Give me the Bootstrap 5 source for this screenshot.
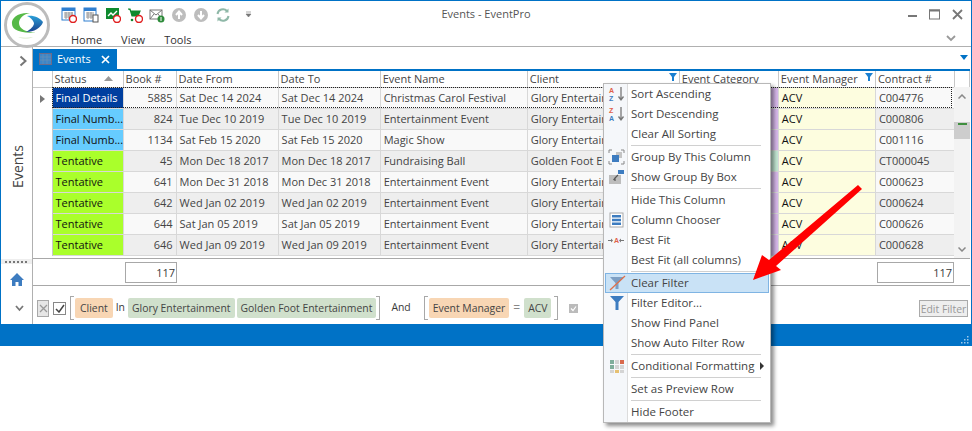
<!DOCTYPE html>
<html lang="en">
<head>
<meta charset="UTF-8" />
<title>Events - EventPro</title>
<link href="https://cdn.jsdelivr.net/npm/bootstrap@5.3.0/dist/css/bootstrap.min.css" rel="stylesheet" />
<style>
  body { background: #fff; font-family: "Open Sans", "Noto Sans", sans-serif; font-size: 11px; color: #3a3a3a; overflow: hidden; }
  .app-win { width: 972px; height: 346px; background: #fff; border: 1px solid #0072c6; border-bottom: 0; position: relative; }
  .ribbon { height: 46px; border-bottom: 1px solid #b0b0b0; }
  .logo-wrap { position: absolute; left: 3px; top: 1px; }
  .qat { padding-left: 60px; height: 27px; margin-bottom: 4px; gap: 6px; }
  .qat-more { margin-left: 8px; }
  .win-title { position: absolute; left: 0; right: 0; top: 5px; text-align: center; color: #555; }
  .win-btns { position: absolute; right: 8px; top: 8px; gap: 12px; }
  .rib-chevron { position: absolute; right: 15px; top: 34px; }
  .rib-tabs { padding-left: 70px; gap: 19px; height: 15px; color: #333; line-height: 15px; }
  .body-row { height: 277px; }
  .rail { width: 32px; border-right: 1px solid #b0b0b0; }
  .rail-top { height: 212px; }
  .rail-open { position: absolute; left: 18px; top: 8px; }
  .rail-label { position: absolute; left: 6px; top: 98px; writing-mode: vertical-rl; transform: rotate(180deg); font-size: 14px; color: #444; }
  .grip { height: 5px; background: #eee; }
  .rail-home { margin-top: 9px; }
  .rail-more { margin-top: 19px; padding-left: 6px; }
  .main-col { width: 937px; }
  .tab-strip { height: 24px; border-bottom: 2px solid #0072c6; }
  .doc-tab { width: 84px; height: 20px; margin-top: 2px; background: #0072c6; color: #fff; padding-left: 6px; gap: 5px; font-size: 11px; }
  .tab-close { margin-left: 5px; }
  .tab-menu { position: absolute; right: 2px; top: 8px; }
  .grid-box { height: 188px; border-bottom: 1px solid #a8a8a8; overflow: hidden; }
  .ev-table { table-layout: fixed; width: 937px; border-collapse: collapse; margin: 0; }
  .ev-table th { font-weight: 400; height: 16px; padding: 0 2px; border-right: 1px solid #c8c8c8; border-bottom: 1px solid #c8c8c8; background: #fff; position: relative; white-space: nowrap; overflow: hidden; line-height: 15px; color: #444; }
  .ev-table td { height: 21px; padding: 0 3px; border-right: 1px solid #d8d8d8; border-bottom: 1px solid #d8d8d8; white-space: nowrap; overflow: hidden; line-height: 20px; color: #444; }
  .ev-table tr:nth-child(odd) td { background: #f9f9f9; }
  .ev-table tr:nth-child(even) td { background: #eeeeee; }
  .ev-table td.ind { background: #fff !important; border-bottom: 0; border-right-color: #c8c8c8; padding: 0; text-align: center; }
  .ev-table td.num { text-align: right; }
  .ev-table td.st-details { background: #003f9f !important; color: #fff; }
  .ev-table td.st-numbers { background: #66ccff !important; color: #111; }
  .ev-table td.st-tent { background: #aaff2b !important; color: #111; }
  .ev-table td.mgr { background: #fdfddf !important; color: #111; }
  .ev-table td.cat-p { background: #d7b8ea !important; }
  .ev-table td.cat-g { background: #c4e8d4 !important; }
  .c-ind { width: 19px; } .c-st { width: 71px; } .c-bk { width: 53px; } .c-dt { width: 102px; }
  .c-nm { width: 147px; } .c-cl { width: 152px; } .c-cat { width: 99px; } .c-mg { width: 97px; }
  .c-ct { width: 79px; } .c-sb { width: 15px; }
  .sort-up { position: absolute; right: 10px; top: 5px; }
  .col-filter { position: absolute; right: 2px; top: 2px; }
  .focus-box { position: absolute; left: 19px; top: 16px; width: 900px; height: 21px; border: 1px dotted #222; pointer-events: none; }
  .scroll-cell { position: absolute; right: 0; top: 16px; width: 16px; height: 171px; background: #f3f3f3; }
  .scroll-thumb { position: absolute; left: 0; right: 0; top: 35px; height: 17px; background: #cdcdcd; }
  .scroll-mark { position: absolute; left: 4px; top: 36px; width: 9px; height: 2px; background: #3f8f3f; }
  .scroll-up { position: absolute; left: 4px; top: 7px; }
  .scroll-down { position: absolute; left: 4px; bottom: 6px; }
  .foot-row { height: 27px; border-bottom: 1px solid #a8a8a8; padding-left: 92px; }
  .sum-box { width: 52px; height: 21px; border: 1px solid #a8a8a8; text-align: right; padding-right: 1px; line-height: 19px; }
  .sum-end { margin-left: 700px; width: 77px; }
  .filter-row { height: 38px; padding-left: 4px; padding-top: 6px; font-size: 10.4px; }
  .f-x { width: 12px; height: 17px; border: 1px solid #a8a8a8; background: #e6e6e6; }
  .f-chk { width: 13px; height: 13px; border: 1px solid #888; margin-left: 4px; margin-right: 4px; }
  .f-br { width: 4px; height: 24px; border: 1px solid #a8a8a8; }
  .f-br-l { border-right: 0; } .f-br-r { border-left: 0; }
  .chip { height: 20px; line-height: 20px; padding: 0 4px; border-radius: 2px; color: #444; white-space: nowrap; }
  .chip-f { background: #f8d6b4; } .chip-v { background: #d0e0cc; }
  .chip-client { padding: 0 5px; }
  .gap-in { margin: 0 3px 0 3px; }
  .chip-lead { margin-left: 1px; } .chip-next { margin-left: 2px; }
  .word-and { margin-left: 11px; margin-right: 13px; }
  .word-eq { margin: 0 4px; color: #888; font-size: 12px; }
  .br-end { margin-left: 3px; }
  .f-done { margin-left: 11px; }
  .edit-filter { position: absolute; right: 2px; top: 14px; width: 49px; height: 17px; padding: 0; font-size: 10.4px; line-height: 14px; border-radius: 0; white-space: nowrap; }
  .edit-filter:disabled { background: #eee; border: 1px solid #aaa; color: #999; opacity: 1; }
  .status-bar { height: 22px; background: #0072c6; position: relative; }
  .size-grip { position: absolute; right: 2px; bottom: 2px; }
  .ctx-menu { position: absolute; left: 603px; top: 83px; width: 168px; height: 340px; background: #fff; border: 1px solid #b8b8b8; box-shadow: 3px 3px 4px rgba(0,0,0,.45); padding: 0 1px; z-index: 5; }
  .ctx-gutter { position: absolute; left: 0; top: 0; bottom: 0; width: 24px; background: #f5f7fa; border-right: 1px solid #dcdcdc; }
  .ctx-item { position: relative; display: flex; align-items: center; height: 20px; padding-left: 26px; color: #444; font-size: 11.5px; white-space: nowrap; }
  .ctx-item.hot { background: #c9e2f6; outline: 1px solid #7fb4e3; outline-offset: -1px; }
  .ctx-item svg { flex: none; margin-left: -23px; margin-right: 5px; }
  .ctx-sep { position: relative; height: 3px; margin-left: 26px; margin-right: 8px; }
  .ctx-sep::after { content: ""; position: absolute; left: 0; right: 0; top: 1px; height: 1px; background: #d0d0d0; }
  .sub-arrow { position: absolute; right: 5px; top: 6px; width: 0; height: 0; border-left: 4px solid #333; border-top: 4px solid transparent; border-bottom: 4px solid transparent; }
  .red-arrow { position: absolute; left: 0; top: 0; z-index: 6; pointer-events: none; }
  .ico-txt { font-family: "Liberation Sans", sans-serif; font-weight: 700; font-size: 7px; }
</style>
</head>
<body>
<div class="app-win">
  <div class="ribbon position-relative">
    <div class="win-title">Events - EventPro</div>
    <div class="d-flex align-items-center qat">
      <svg width="16" height="16" viewBox="0 0 16 16"><rect x="1" y="1" width="13" height="12" fill="#fff" stroke="#2f7fd0"/><path d="M1 1h13v3H1z" fill="#2f7fd0"/><path d="M3 6h9M3 8h9M3 10h9M5 5v7M8 5v7M11 5v7" stroke="#999"/><circle cx="12" cy="12" r="3.500" fill="#fff" stroke="#e02020" stroke-width="1.400"/></svg>
      <svg width="16" height="16" viewBox="0 0 16 16"><rect x="1" y="1" width="12" height="13" fill="#fff" stroke="#2f7fd0"/><path d="M1 1h12v3H1z" fill="#2f7fd0"/><path d="M3 6h8M3 8h8M3 10h8M5 5v7M8 5v7" stroke="#999"/><rect x="10" y="8" width="5" height="7" fill="#fff" stroke="#555"/></svg>
      <svg width="16" height="16" viewBox="0 0 16 16"><rect x="1" y="1" width="13" height="11" fill="#0e8a2e"/><path d="M3 9l3-3 2 2 4-4" stroke="#fff" fill="none" stroke-width="1.400"/><circle cx="12" cy="12" r="3.500" fill="#fff" stroke="#e02020" stroke-width="1.400"/></svg>
      <svg width="16" height="16" viewBox="0 0 16 16"><path d="M1 2h2l2 7h6l2-5H4" fill="#0e8a2e" stroke="#0e8a2e" stroke-width="1.200"/><circle cx="5" cy="13" r="1.300" fill="#0e8a2e"/><circle cx="12" cy="12" r="3.500" fill="#fff" stroke="#e02020" stroke-width="1.400"/></svg>
      <svg width="16" height="16" viewBox="0 0 16 16"><rect x="1" y="3" width="12" height="9" fill="#fff" stroke="#777"/><path d="M1 3l6 5 6-5M1 12l4-5M13 12l-4-5" fill="none" stroke="#777"/><circle cx="12" cy="12" r="3.500" fill="#2e8b3a"/><path d="M12 10v4" stroke="#fff"/></svg>
      <svg width="16" height="16" viewBox="0 0 16 16"><circle cx="8" cy="8" r="7" fill="#bdbdbd"/><path d="M8 12V5M5 8l3-3.500L11 8" fill="none" stroke="#fff" stroke-width="2"/></svg>
      <svg width="16" height="16" viewBox="0 0 16 16"><circle cx="8" cy="8" r="7" fill="#bdbdbd"/><path d="M8 4v7M5 8l3 3.500L11 8" fill="none" stroke="#fff" stroke-width="2"/></svg>
      <svg width="16" height="16" viewBox="0 0 16 16"><path d="M2.500 7A5.500 5.500 0 0 1 12 4M13.500 9A5.500 5.500 0 0 1 4 12" fill="none" stroke="#8fb8a8" stroke-width="2"/><path d="M13.500 1.500v4h-4zM2.500 14.500v-4h4z" fill="#8fb8a8"/></svg>
      <svg class="qat-more" width="7" height="7" viewBox="0 0 7 7"><path d="M1 1h5M1 3h5L3.500 6z" fill="#777" stroke="#777" stroke-width=".6"/></svg>
    </div>
    <div class="d-flex rib-tabs"><span>Home</span><span>View</span><span>Tools</span></div>
    <div class="d-flex align-items-center win-btns">
      <svg width="9" height="9" viewBox="0 0 9 9"><path d="M0 6h9" stroke="#777" stroke-width="2"/></svg>
      <svg width="11" height="11" viewBox="0 0 11 11"><rect x=".5" y="1" width="10" height="9" fill="none" stroke="#777"/><path d="M0 1.500h11" stroke="#777" stroke-width="2"/></svg>
      <svg width="11" height="11" viewBox="0 0 11 11"><path d="M1 1l9 9M10 1l-9 9" stroke="#777" stroke-width="1.800"/></svg>
    </div>
    <svg class="rib-chevron" width="10" height="7" viewBox="0 0 10 7"><path d="M1 1l4 4 4-4" fill="none" stroke="#999" stroke-width="1.800"/></svg>
  </div>

  <div class="d-flex body-row">
    <div class="rail d-flex flex-column">
      <div class="rail-top position-relative">
        <svg class="rail-open" width="9" height="12" viewBox="0 0 9 12"><path d="M1.500 1.500L6.500 6l-5 4.500" fill="none" stroke="#777" stroke-width="2"/></svg>
        <div class="rail-label">Events</div>
      </div>
      <div class="grip d-flex justify-content-center align-items-center">
        <svg width="24" height="2" viewBox="0 0 24 2"><path d="M0 1h24" stroke="#777" stroke-width="2" stroke-dasharray="2 2"/></svg>
      </div>
      <div class="d-flex justify-content-center rail-home">
        <svg width="14" height="13" viewBox="0 0 14 13"><path d="M7 0L0 7h2v6h3.500V9h3v4H12V7h2z" fill="#3d7cc0"/></svg>
      </div>
      <div class="d-flex justify-content-center rail-more">
        <svg width="9" height="7" viewBox="0 0 9 7"><path d="M1 1l3.500 4L8 1" fill="none" stroke="#777" stroke-width="1.800"/></svg>
      </div>
    </div>

    <div class="main-col d-flex flex-column">
      <div class="tab-strip d-flex position-relative">
        <div class="doc-tab d-flex align-items-center">
          <svg width="13" height="12" viewBox="0 0 13 12"><rect x=".5" y=".5" width="12" height="11" fill="#3d86c8" stroke="#6b6b8a"/><path d="M1 4h11M1 7h11M4 1v10M8 1v10" stroke="#6b8fb5" stroke-width=".7"/></svg>
          <span>Events</span>
          <svg class="tab-close" width="9" height="9" viewBox="0 0 9 9"><path d="M1 1l7 7M8 1L1 8" stroke="#fff" stroke-width="1.700"/></svg>
        </div>
        <svg class="tab-menu" width="8" height="5" viewBox="0 0 8 5"><path d="M0 0h8L4 5z" fill="#0072c6"/></svg>
      </div>
      <div class="grid-box position-relative">
        <table class="ev-table">
          <colgroup><col class="c-ind"><col class="c-st"><col class="c-bk"><col class="c-dt"><col class="c-dt"><col class="c-nm"><col class="c-cl"><col class="c-cat"><col class="c-mg"><col class="c-ct"><col class="c-sb"></colgroup>
          <thead><tr>
            <th></th>
            <th>Status<svg class="sort-up" width="9" height="5" viewBox="0 0 9 5"><path d="M0 5L4.500 0 9 5z" fill="#999"/></svg></th>
            <th>Book #</th><th>Date From</th><th>Date To</th><th>Event Name</th>
            <th>Client<svg class="col-filter" width="8" height="8" viewBox="0 0 8 8"><path d="M0 0h8L5 4v4H3V4z" fill="#1a7fd0"/></svg></th>
            <th>Event Category</th>
            <th>Event Manager<svg class="col-filter" width="8" height="8" viewBox="0 0 8 8"><path d="M0 0h8L5 4v4H3V4z" fill="#1a7fd0"/></svg></th>
            <th>Contract #</th><th></th>
          </tr></thead>
          <tbody id="gridBody"></tbody>
        </table>
        <div class="focus-box"></div>
        <div class="scroll-cell">
          <svg class="scroll-up" width="8" height="5" viewBox="0 0 8 5"><path d="M.5 4.500L4 1l3.500 3.500" fill="none" stroke="#888" stroke-width="1.500"/></svg>
          <div class="scroll-thumb"></div>
          <div class="scroll-mark"></div>
          <svg class="scroll-down" width="8" height="5" viewBox="0 0 8 5"><path d="M.5.500L4 4 7.500.5" fill="none" stroke="#888" stroke-width="1.500"/></svg>
        </div>
      </div>
      <div class="foot-row d-flex align-items-center">
        <div class="sum-box">117</div>
        <div class="sum-box sum-end">117</div>
      </div>
      <div class="filter-row d-flex align-items-center position-relative">
        <div class="f-x d-flex align-items-center justify-content-center"><svg width="9" height="9" viewBox="0 0 9 9"><path d="M1 1l7 7M8 1L1 8" stroke="#999" stroke-width="1.300"/></svg></div>
        <div class="f-chk d-flex align-items-center justify-content-center"><svg width="10" height="9" viewBox="0 0 10 9"><path d="M1 5l3 3 5-7" fill="none" stroke="#444" stroke-width="1.500"/></svg></div>
        <div class="f-br f-br-l"></div>
        <span class="chip chip-f chip-lead chip-client">Client</span>
        <span class="gap-in">In</span>
        <span class="chip chip-v">Glory Entertainment</span>
        <span class="chip chip-v chip-next">Golden Foot Entertainment</span>
        <div class="f-br f-br-r"></div>
        <span class="word-and">And</span>
        <div class="f-br f-br-l"></div>
        <span class="chip chip-f chip-lead">Event Manager</span>
        <span class="word-eq">=</span>
        <span class="chip chip-v">ACV</span>
        <div class="f-br f-br-r br-end"></div>
        <svg class="f-done" width="9" height="9" viewBox="0 0 9 9"><rect width="9" height="9" fill="#bbb"/><path d="M2 4.500l2 2 3-4" fill="none" stroke="#fff" stroke-width="1.200"/></svg>
        <button class="btn edit-filter" type="button" disabled>Edit Filter</button>
      </div>
    </div>
  </div>
  <div class="status-bar">
    <svg class="size-grip" width="9" height="9" viewBox="0 0 9 9"><path d="M7 1h1.500v1.500H7zM4 4h1.500v1.500H4zM7 4h1.500v1.500H7zM1 7h1.500v1.500H1zM4 7h1.500v1.500H4zM7 7h1.500v1.500H7z" fill="#9cc8ea"/></svg>
  </div>

  <div class="logo-wrap">
    <svg width="46" height="46" viewBox="0 0 46 46">
      <defs><linearGradient id="logoBlue" x1="0" y1="0" x2="0" y2="1"><stop offset="0" stop-color="#2a9fd8"/><stop offset="1" stop-color="#1b3f8c"/></linearGradient></defs>
      <circle cx="23" cy="23" r="21.500" fill="#fff" stroke="#bcbcbc" stroke-width="3"/>
      <path d="M26 11C14 10 7 16 8 22c0 6 8 9 24 9-10-1-17-4-17-10 0-5 5-9 11-10z" fill="#56b947"/>
      <path d="M23 14c7-1 13 2 16 6-2 6-9 10-17 10 5-3 8-6 8-9-1-3-4-6-7-7z" fill="url(#logoBlue)"/>
      <path d="M14 35c5 2 11 2 15 0-5 1-10 1-15 0z" fill="#d5e8c8"/>
    </svg>
  </div>
</div>

<div class="ctx-menu">
  <div class="ctx-gutter"></div>
  <div class="ctx-item"><svg width="18" height="16" viewBox="0 0 18 16"><text class="ico-txt" x="1" y="6.500" fill="#e0604a">A</text><text class="ico-txt" x="1" y="15" fill="#3d7cc0">Z</text><path d="M13 1v12M10.500 10.500L13 14l2.500-3.500" fill="none" stroke="#777" stroke-width="1.300"/></svg><span>Sort Ascending</span></div>
  <div class="ctx-item"><svg width="18" height="16" viewBox="0 0 18 16"><text class="ico-txt" x="1" y="6.500" fill="#e0604a">Z</text><text class="ico-txt" x="1" y="15" fill="#3d7cc0">A</text><path d="M13 1v12M10.500 10.500L13 14l2.500-3.500" fill="none" stroke="#777" stroke-width="1.300"/></svg><span>Sort Descending</span></div>
  <div class="ctx-item"><span>Clear All Sorting</span></div>
  <div class="ctx-sep"></div>
  <div class="ctx-item"><svg width="18" height="16" viewBox="0 0 18 16"><path d="M1 4V1h3M13 1h3v3M16 12v3h-3M4 15H1v-3" fill="none" stroke="#888"/><rect x="8" y="3" width="6" height="6" fill="#c4c4c4"/><rect x="4" y="6" width="7" height="7" fill="#3d7cc0"/></svg><span>Group By This Column</span></div>
  <div class="ctx-item"><svg width="18" height="16" viewBox="0 0 18 16"><rect x="1" y="6" width="12" height="9" fill="#bdbdbd"/><rect x="10" y="1" width="6" height="4" fill="#3d7cc0"/><path d="M10 6L7 9v3M7 9l-1.500 2" fill="none" stroke="#555" stroke-width="1.200"/></svg><span>Show Group By Box</span></div>
  <div class="ctx-sep"></div>
  <div class="ctx-item"><span>Hide This Column</span></div>
  <div class="ctx-item"><svg width="18" height="16" viewBox="0 0 18 16"><rect x="2" y="1" width="13" height="14" fill="#fff" stroke="#aaa"/><path d="M4 3h9v2.500H4zM4 6.800h9v2.500H4zM4 10.500h9V13H4z" fill="#3d7cc0"/></svg><span>Column Chooser</span></div>
  <div class="ctx-item"><svg width="18" height="16" viewBox="0 0 18 16"><text class="ico-txt" x="6" y="11" fill="#e0604a">A</text><path d="M0 8.500h3.500M12.500 8.500H16" stroke="#777" stroke-width="1.200"/><path d="M5 8.500L3 6.500v4zM11 8.500l2-2v4z" fill="#777"/></svg><span>Best Fit</span></div>
  <div class="ctx-item"><span>Best Fit (all columns)</span></div>
  <div class="ctx-sep"></div>
  <div class="ctx-item hot"><svg width="18" height="16" viewBox="0 0 18 16"><path d="M2 2h14L10.500 8v6h-3V8z" fill="#7d9fc4"/><path d="M2 15L17 1" stroke="#e0704a" stroke-width="1.300"/></svg><span>Clear Filter</span></div>
  <div class="ctx-item"><svg width="18" height="16" viewBox="0 0 18 16"><path d="M2 1h14L10.500 7v8h-3V7z" fill="#3d7cc0"/></svg><span>Filter Editor...</span></div>
  <div class="ctx-item"><span>Show Find Panel</span></div>
  <div class="ctx-item"><span>Show Auto Filter Row</span></div>
  <div class="ctx-sep"></div>
  <div class="ctx-item"><svg width="18" height="16" viewBox="0 0 18 16"><path d="M2 2h4v4H2z" fill="#7fae9c"/><path d="M7 2h4v4H7z" fill="#d4d4d4"/><path d="M12 2h4v4h-4z" fill="#d9694c"/><path d="M2 7h4v4H2z" fill="#7fae9c"/><path d="M7 7h4v4H7z" fill="#d4d4d4"/><path d="M12 7h4v4h-4z" fill="#d4d4d4"/><path d="M2 12h4v3H2z" fill="#d4d4d4"/><path d="M7 12h4v3H7z" fill="#e6c071"/><path d="M12 12h4v3h-4z" fill="#d4d4d4"/></svg><span>Conditional Formatting</span><span class="sub-arrow"></span></div>
  <div class="ctx-sep"></div>
  <div class="ctx-item"><span>Set as Preview Row</span></div>
  <div class="ctx-sep"></div>
  <div class="ctx-item"><span>Hide Footer</span></div>
</div>

<svg class="red-arrow" width="972" height="431" viewBox="0 0 972 431">
  <path d="M753 280L762 255 769 260 858 185 862 189 776 266 781 270z" fill="#f00"/>
</svg>

<script src="https://cdn.jsdelivr.net/npm/bootstrap@5.3.0/dist/js/bootstrap.bundle.min.js"></script>
<script>
  const rows = [
    ['Final Details', 'st-details', '5885', 'Sat Dec 14 2024', 'Christmas Carol Festival', 'Glory Entertainment', 'cat-p', 'C004776'],
    ['Final Numbers', 'st-numbers', '824', 'Tue Dec 10 2019', 'Entertainment Event', 'Glory Entertainment', 'cat-p', 'C000806'],
    ['Final Numbers', 'st-numbers', '1134', 'Sat Feb 15 2020', 'Magic Show', 'Glory Entertainment', 'cat-p', 'C001116'],
    ['Tentative', 'st-tent', '45', 'Mon Dec 18 2017', 'Fundraising Ball', 'Golden Foot Entertainment', 'cat-g', 'CT000045'],
    ['Tentative', 'st-tent', '641', 'Mon Dec 31 2018', 'Entertainment Event', 'Glory Entertainment', 'cat-p', 'C000623'],
    ['Tentative', 'st-tent', '642', 'Wed Jan 02 2019', 'Entertainment Event', 'Glory Entertainment', 'cat-p', 'C000624'],
    ['Tentative', 'st-tent', '644', 'Sat Jan 05 2019', 'Entertainment Event', 'Glory Entertainment', 'cat-p', 'C000626'],
    ['Tentative', 'st-tent', '646', 'Wed Jan 09 2019', 'Entertainment Event', 'Glory Entertainment', 'cat-p', 'C000628']
  ];
  const marker = '<svg width="5" height="8" viewBox="0 0 5 8"><path d="M0 0l5 4-5 4z" fill="#777"/></svg>';
  document.getElementById('gridBody').innerHTML = rows.map((r, i) => {
    const label = r[0] === 'Final Numbers' ? 'Final Numb...' : r[0];
    return `<tr>
      <td class="ind">${i === 0 ? marker : ''}</td>
      <td class="${r[1]}">${label}</td>
      <td class="num">${r[2]}</td>
      <td>${r[3]}</td><td>${r[3]}</td><td>${r[4]}</td><td>${r[5]}</td>
      <td class="${r[6]}"></td>
      <td class="mgr">ACV</td>
      <td>${r[7]}</td><td class="ind"></td>
    </tr>`;
  }).join('');
</script>
</body>
</html>
